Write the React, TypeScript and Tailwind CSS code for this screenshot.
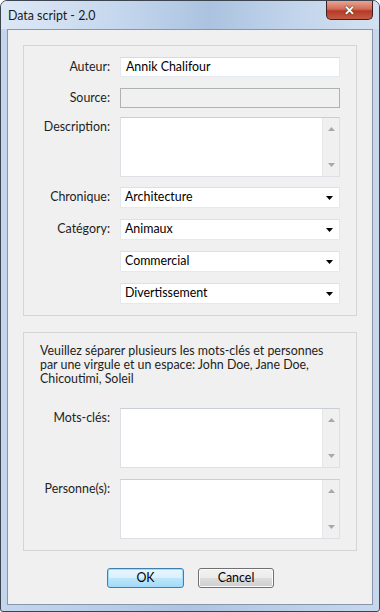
const font = { fontFamily: '"Segoe UI", Lato, "Noto Sans", sans-serif' };

const Arrow = ({ up }: { up?: boolean }) => (
  <svg width="7" height="4" viewBox="0 0 7 4" className="block">
    <path d={up ? "M0 4 L3.5 0 L7 4 Z" : "M0 0 L7 0 L3.5 4 Z"} fill="#a8a8a8" />
  </svg>
);

const TextBox = ({ value, disabled }: { value?: string; disabled?: boolean }) => (
  <div
    className={`h-[20px] w-[220px] border px-[5px] flex items-center text-[12.4px] text-black ${
      disabled
        ? "bg-[#f0f0f0] border-[#adb2b5]"
        : "bg-white border-[#e3e9ef] border-t-[#d5dae0]"
    }`}
  >
    {value}
  </div>
);

const TextArea = () => (
  <div className="h-[60px] w-[220px] border border-[#dcdfe4] border-t-[#c9ced6] bg-white flex justify-end">
    <div className="w-[17px] h-full bg-[#f0f0f0] border-l border-[#e6e6e6] flex flex-col items-center justify-between py-[9px]">
      <Arrow up />
      <Arrow />
    </div>
  </div>
);

const Select = ({ value }: { value: string }) => (
  <div className="h-[21px] w-[220px] border border-[#e3e9ef] border-t-[#dcdfe4] bg-white flex items-center justify-between pl-[4px] pr-[6px] text-[12.4px] text-black">
    <span>{value}</span>
    <svg width="7" height="4" viewBox="0 0 7 4">
      <path d="M0 0 L7 0 L3.5 4 Z" fill="#000" />
    </svg>
  </div>
);

const Row = ({
  label,
  children,
  top,
  mt,
}: {
  label?: string;
  children: React.ReactNode;
  top?: boolean;
  mt: string;
}) => (
  <div className={`flex ${top ? "items-start" : "items-center"} ${mt}`}>
    <div className={`w-[86px] text-right text-[12.4px] text-[#1e1e1e] ${top ? "pt-[1px]" : ""}`}>{label}</div>
    <div className="ml-[10px]">{children}</div>
  </div>
);

export default function App() {
  return (
    <div className="w-[380px] h-[612px] bg-white" style={font}>
      <div className="w-[380px] h-[612px] flex flex-col rounded-t-[7px] rounded-b-[3px] border border-[#3c4450] bg-gradient-to-r from-[#c3d6ee] via-[#adc5e2] to-[#c7d8ec] overflow-hidden">
        {/* title bar */}
        <div className="h-[28px] flex items-start justify-between shrink-0 bg-[linear-gradient(90deg,#dde8f5_0%,#c6d8ee_30%,#abc3e0_55%,#c4d6ec_80%,#d3e1f1_100%)]">
          <div className="pl-[7px] pt-[6px] text-[12.4px] text-[#1a1a1a]">Data script - 2.0</div>
          <div className="mr-[6px] w-[47px] h-[19px] rounded-b-[5px] border border-t-0 border-[#3b2220] bg-[linear-gradient(180deg,#e8a493_0%,#d16b57_45%,#b53a25_55%,#c45a45_100%)] flex items-center justify-center">
            <span className="text-white font-bold text-[13px] leading-none [text-shadow:0_0_1px_#3a1a14,0_0_1px_#3a1a14]">✕</span>
          </div>
        </div>
        {/* client area */}
        <div className="flex-1 mx-[6px] mb-[6px] border border-[#8596ad] bg-[#f0f0f0] flex flex-col items-center">
          {/* group 1 */}
          <div className="mt-[15px] w-[334px] h-[271px] border border-[#d5d5d5] flex flex-col">
            <Row label="Auteur:" mt="mt-[11px]">
              <TextBox value="Annik Chalifour" />
            </Row>
            <Row label="Source:" mt="mt-[11px]">
              <TextBox disabled />
            </Row>
            <Row label="Description:" top mt="mt-[9px]">
              <TextArea />
            </Row>
            <Row label="Chronique:" mt="mt-[10px]">
              <Select value="Architecture" />
            </Row>
            <Row label="Catégory:" mt="mt-[11px]">
              <Select value="Animaux" />
            </Row>
            <Row mt="mt-[11px]">
              <Select value="Commercial" />
            </Row>
            <Row mt="mt-[11px]">
              <Select value="Divertissement" />
            </Row>
          </div>
          {/* group 2 */}
          <div className="mt-[16px] w-[334px] h-[219px] border border-[#d5d5d5] flex flex-col">
            <p className="mt-[11px] ml-[16px] w-[310px] whitespace-nowrap text-[12.4px] leading-[14px] text-[#1e1e1e]">
              Veuillez séparer plusieurs les mots-clés et personnes
              <br />
              par une virgule et un espace: John Doe, Jane Doe,
              <br />
              Chicoutimi, Soleil
            </p>
            <Row label="Mots-clés:" top mt="mt-[22px]">
              <TextArea />
            </Row>
            <Row label="Personne(s):" top mt="mt-[11px]">
              <TextArea />
            </Row>
          </div>
          {/* buttons */}
          <div className="mt-[17px] flex gap-[14px] pl-[1px]">
            <div className="w-[77px] h-[20px] rounded-[3px] border border-[#3c7fb1] bg-[linear-gradient(180deg,#eaf6fd_0%,#d9f0fc_50%,#bee6fd_50%,#a7d9f5_100%)] flex items-center justify-center text-[12.4px] text-black shadow-[inset_0_0_0_1px_#9ddcfc]">
              OK
            </div>
            <div className="w-[76px] h-[20px] rounded-[3px] border border-[#707070] bg-[linear-gradient(180deg,#f2f2f2_0%,#ebebeb_50%,#dddddd_50%,#cfcfcf_100%)] flex items-center justify-center text-[12.4px] text-black shadow-[inset_0_0_0_1px_#fcfcfc]">
              Cancel
            </div>
          </div>
        </div>
      </div>
    </div>
  );
}
